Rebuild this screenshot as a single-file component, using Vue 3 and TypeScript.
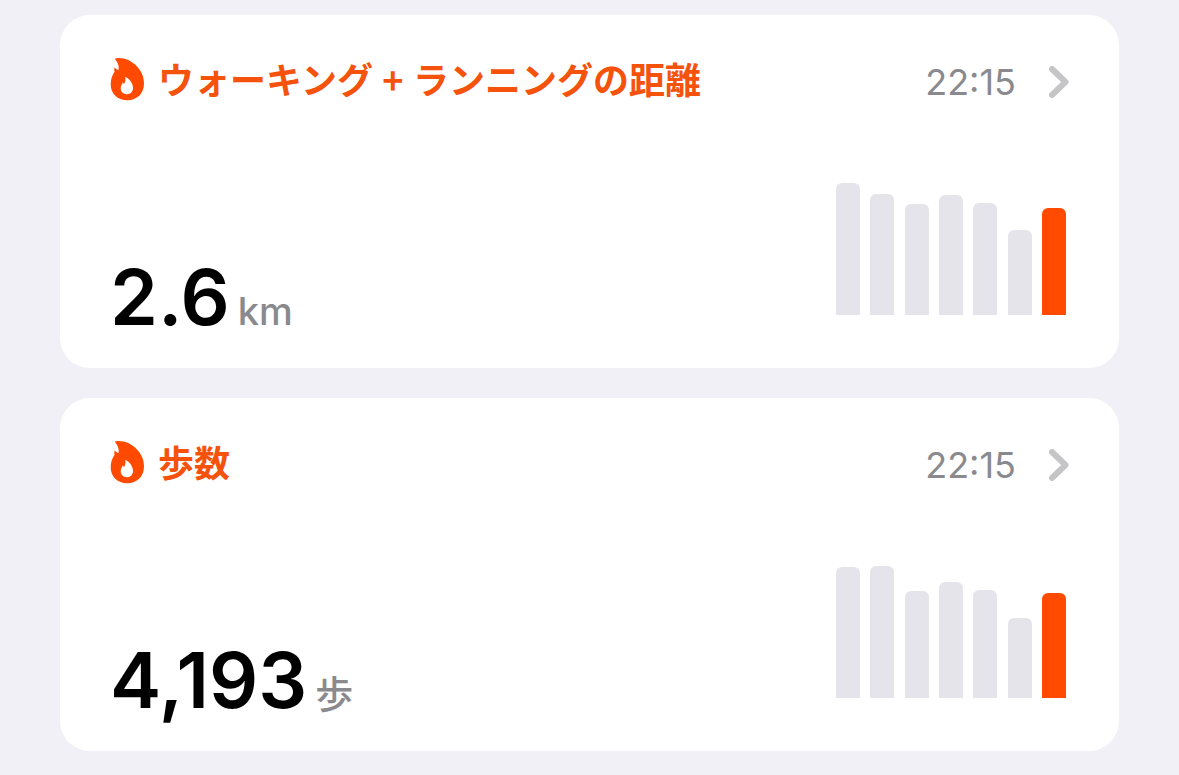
<script setup lang="ts">
interface Metric {
  id: string
  title: string[]
  time: string
  value: string
  unit: string
  bars: number[]
}

const metrics: Metric[] = [
  {
    id: 'distance',
    title: ['ウォーキング', '+', 'ランニングの距離'],
    time: '22:15',
    value: '2.6',
    unit: 'km',
    bars: [132, 121, 111, 120, 112, 85, 107],
  },
  {
    id: 'steps',
    title: ['歩数'],
    time: '22:15',
    value: '4,193',
    unit: '歩',
    bars: [131, 132, 107, 116, 108, 80, 105],
  },
]
</script>

<template>
  <main class="summary">
    <a v-for="m in metrics" :key="m.id" class="card" :href="'#' + m.id">
      <header class="head">
        <svg class="flame" viewBox="0 0 35 43" aria-hidden="true">
          <path
            fill-rule="evenodd"
            d="M6.200 .2C14.500 -.6 21.500 2.800 27 8.500C31.500 13.200 34 19 34 25.500C34 35.500 27 42.300 17.300 42.300C7.500 42.300 .7 35.500 .7 26.500C.7 21 2.200 17.200 4.600 13.800C4.200 12.500 4.200 11 4.600 9.600C5.600 10.700 6.800 11.500 8.400 12.200C9.300 8.300 8 4.800 5.300 1.600C4.700 .9 5.200 .3 6.200 .2ZM15.200 18.800C15.900 21.800 15 24.300 13.900 26.200C13.600 25.300 13.200 24.800 12.600 24.500C12.400 26.300 10.700 27.500 10.700 30.300C10.700 33.800 13.400 36.200 17 36.200C20.600 36.200 23 33.700 23 30.300C23 25.500 20.300 21.300 15.200 18.800Z"
          />
        </svg>
        <h2 class="title">
          <span v-for="part in m.title" :key="part" :class="{ plus: part === '+' }">{{ part }}</span>
        </h2>
        <time class="time">{{ m.time }}</time>
        <svg class="chevron" viewBox="0 0 20 32" aria-hidden="true">
          <path d="M3 3L16.500 16L3 29" />
        </svg>
      </header>
      <div class="body">
        <p class="reading">
          <span class="value">{{ m.value }}</span>
          <span class="unit">{{ m.unit }}</span>
        </p>
        <div class="chart" aria-hidden="true">
          <span v-for="(h, i) in m.bars" :key="i" class="bar" :style="{ height: h + 'px' }"></span>
        </div>
      </div>
    </a>
  </main>
</template>

<style>
body {
  background: #f1f0f6;
}
</style>

<style scoped>
.summary {
  display: flex;
  flex-direction: column;
  gap: 30px;
  padding: 15px 60px 24px;
  font-family: Inter, 'Noto Sans CJK JP', sans-serif;
}

.card {
  display: flex;
  flex-direction: column;
  gap: 77px;
  padding: 43px 50px 31px;
  border-radius: 30px;
  background: #fff;
  color: #000;
  text-decoration: none;
}

.head {
  display: flex;
  align-items: center;
  height: 48px;
}

.flame {
  align-self: flex-start;
  width: 35px;
  height: 43px;
  margin-right: 13px;
  fill: #ff4a00;
}

.title {
  display: flex;
  flex: 1;
  align-self: flex-start;
  margin: 0;
  color: #f5520c;
  font-family: 'Noto Sans CJK JP', sans-serif;
  font-size: 36px;
  font-weight: 700;
  line-height: 40px;
}

.plus {
  width: 40px;
  text-align: center;
}

.time {
  margin-right: 33px;
  color: #8a8a8e;
  font-size: 36px;
  line-height: 44px;
}

.chevron {
  width: 20px;
  height: 32px;
  fill: none;
  stroke: #c5c5c7;
  stroke-width: 6;
  stroke-linecap: round;
  stroke-linejoin: round;
}

.body {
  display: flex;
  align-items: flex-end;
  justify-content: space-between;
}

.reading {
  display: flex;
  align-items: baseline;
  gap: 8px;
  height: 80px;
  margin: 0;
}

.value {
  font-size: 77px;
  font-weight: 600;
  line-height: 80px;
}

.unit {
  color: #8a8a8e;
  font-size: 38px;
  font-weight: 500;
  line-height: 44px;
}

.chart {
  display: flex;
  align-items: flex-end;
  justify-content: space-between;
  width: 230px;
  height: 132px;
  margin: 0 3px 22px 0;
}

.bar {
  width: 24px;
  border-radius: 6px 6px 0 0;
  background: #e5e4eb;
}

.bar:last-child {
  background: #ff4a00;
}
</style>
